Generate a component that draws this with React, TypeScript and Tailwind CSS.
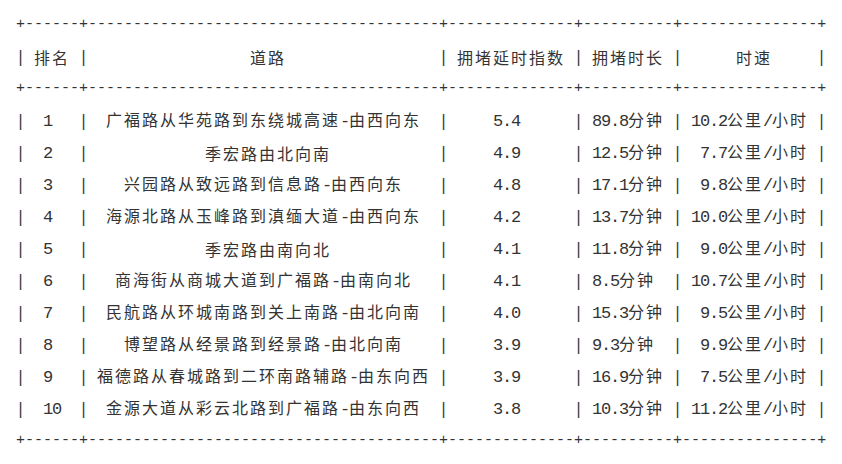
const rows = [
  ["1", "广福路从华苑路到东绕城高速-由西向东", "5.4", "89.8分钟", "10.2公里/小时"],
  ["2", "季宏路由北向南", "4.9", "12.5分钟", "7.7公里/小时"],
  ["3", "兴园路从致远路到信息路-由西向东", "4.8", "17.1分钟", "9.8公里/小时"],
  ["4", "海源北路从玉峰路到滇缅大道-由西向东", "4.2", "13.7分钟", "10.0公里/小时"],
  ["5", "季宏路由南向北", "4.1", "11.8分钟", "9.0公里/小时"],
  ["6", "商海街从商城大道到广福路-由南向北", "4.1", "8.5分钟", "10.7公里/小时"],
  ["7", "民航路从环城南路到关上南路-由北向南", "4.0", "15.3分钟", "9.5公里/小时"],
  ["8", "博望路从经景路到经景路-由北向南", "3.9", "9.3分钟", "9.9公里/小时"],
  ["9", "福德路从春城路到二环南路辅路-由东向西", "3.9", "16.9分钟", "7.5公里/小时"],
  ["10", "金源大道从彩云北路到广福路-由东向西", "3.8", "10.3分钟", "11.2公里/小时"],
];

const header = ["排名", "道路", "拥堵延时指数", "拥堵时长", "时速"];

// content widths in character cells (9px each), without the 1-cell padding each side
const widths = [4, 37, 12, 8, 13];

const border = "+" + widths.map((w) => "-".repeat(w + 2)).join("+") + "+";

const CJK = /[\u4e00-\u9fff]/;

const displayWidth = (s: string) => [...s].reduce((n, ch) => n + (CJK.test(ch) ? 2 : 1), 0);

// same centering rule as the text table: odd leftover goes right for odd text, left for even text
const leftPad = (s: string, w: number) => {
  const d = displayWidth(s);
  const excess = w - d;
  if (excess % 2 && d % 2 === 0) return Math.floor(excess / 2) + 1;
  return Math.floor(excess / 2);
};

const Text = ({ value }: { value: string }) => {
  const parts = value.split(/([\u4e00-\u9fff]+)/).filter(Boolean);
  return (
    <span className="whitespace-pre">
      {parts.map((p, i) =>
        CJK.test(p) ? (
          <span key={i} className="font-['Noto_Sans_CJK_SC',sans-serif] text-[16px] tracking-[2px]">
            {p}
          </span>
        ) : (
          <span key={i} className="font-['Liberation_Mono',monospace] text-[17px] tracking-[-1.2px]">
            {p}
          </span>
        )
      )}
    </span>
  );
};

const Pipe = () => (
  <div className="flex justify-center font-['DejaVu_Sans_Mono',monospace] text-[15px] leading-none">|</div>
);

const pads = ["pl-[0px]", "pl-[9px]", "pl-[18px]", "pl-[27px]", "pl-[36px]", "pl-[45px]", "pl-[54px]", "pl-[63px]", "pl-[72px]", "pl-[81px]", "pl-[90px]", "pl-[99px]", "pl-[108px]", "pl-[117px]", "pl-[126px]", "pl-[135px]", "pl-[144px]", "pl-[153px]", "pl-[162px]", "pl-[171px]", "pl-[180px]"];

const Row = ({ cells }: { cells: string[] }) => (
  <div className="grid h-[32px] grid-cols-[9px_54px_9px_351px_9px_126px_9px_90px_9px_135px_9px] items-center">
    <Pipe />
    {cells.map((c, i) => (
      <div key={i} className="contents">
        <div className={"flex " + pads[1 + leftPad(c, widths[i])]}>
          <Text value={c} />
        </div>
        <Pipe />
      </div>
    ))}
  </div>
);

const Border = () => (
  <div className="flex h-[32px] items-center whitespace-pre font-['Liberation_Mono',monospace] text-[15px]">
    {border}
  </div>
);

export default function App() {
  return (
    <div className="h-[464px] w-[842px] bg-white pl-[16px] pt-[9px] text-[#333]">
      <Border />
      <Row cells={header} />
      <Border />
      {rows.map((r) => (
        <Row key={r[0]} cells={r} />
      ))}
      <Border />
    </div>
  );
}
